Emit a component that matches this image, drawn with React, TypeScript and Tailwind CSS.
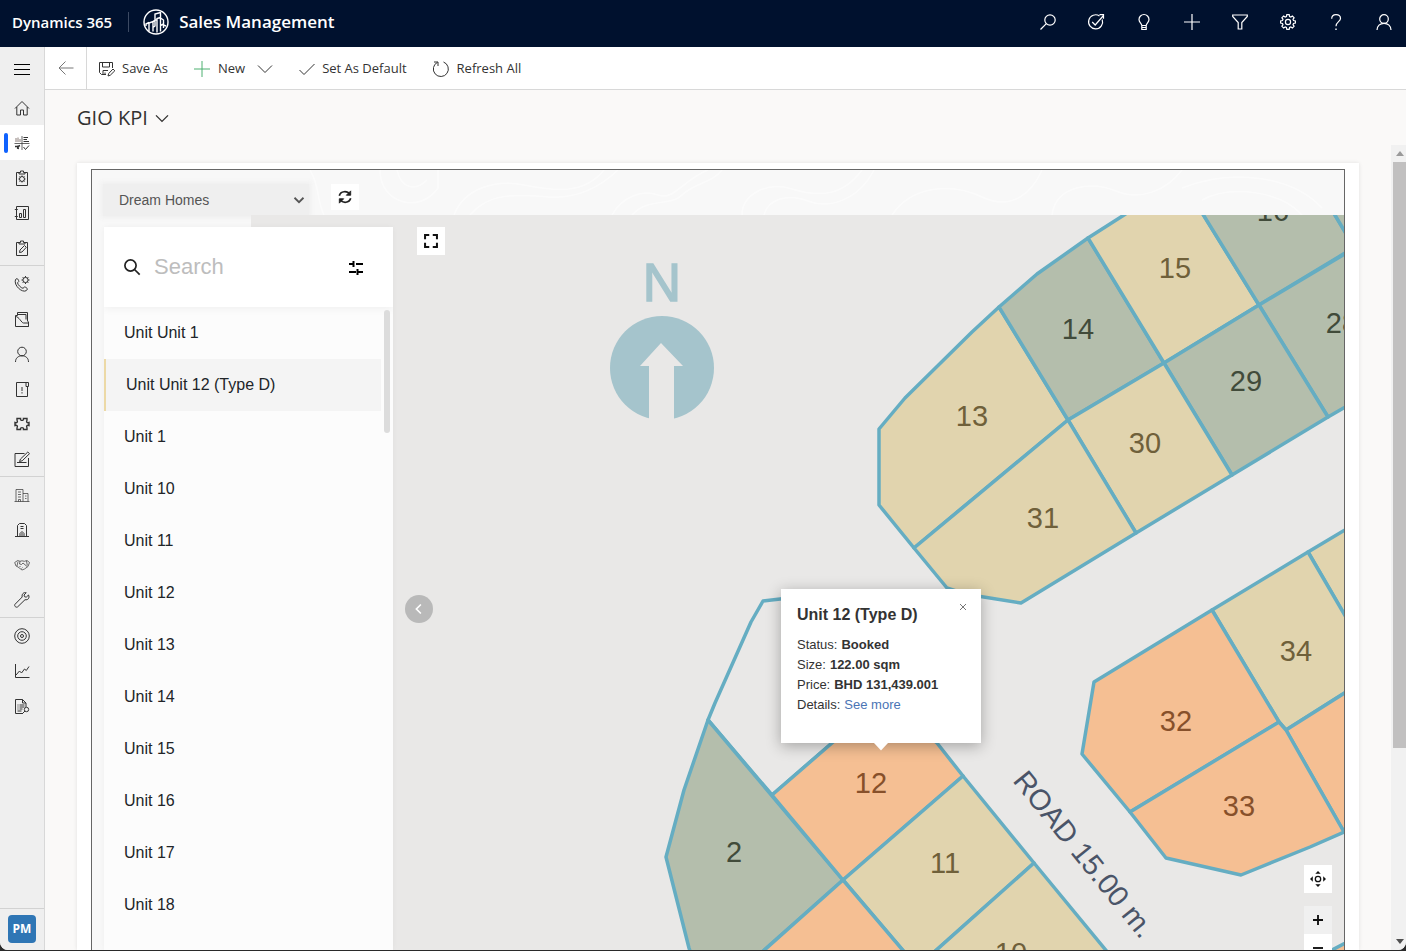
import { useState } from "react";
import type { ReactNode } from "react";

type Status = "available" | "booked" | "sold" | "blank";

type Plot = {
  label?: string;
  status: Status;
  points: string;
  x?: number;
  y?: number;
};

const FILL: Record<Status, string> = {
  available: "#e1d4ae",
  booked: "#f5bf93",
  sold: "#b4beac",
  blank: "none",
};

const LABEL: Record<Status, string> = {
  available: "#6f603a",
  booked: "#87502a",
  sold: "#414b3a",
  blank: "#444444",
};

const PLOTS: Plot[] = [
  { label: "13", status: "available", points: "999,307 1068,420 914,548 879,505 879,429 905,398 972,332", x: 972, y: 426 },
  { label: "14", status: "sold", points: "999,307 1037,274 1088,238 1164,363 1068,420", x: 1078, y: 339 },
  { label: "15", status: "available", points: "1088,238 1124,215 1180,177 1259,305 1164,363", x: 1175, y: 278 },
  { label: "16", status: "sold", points: "1180,177 1310,174 1335,215 1360,257 1360,244 1259,305", x: 1273, y: 221 },
  { status: "sold", points: "1310,174 1400,174 1400,220 1360,257 1335,215" },
  { label: "28", status: "sold", points: "1259,305 1400,221 1400,375 1328,417", x: 1342, y: 333 },
  { label: "29", status: "sold", points: "1164,363 1259,305 1328,417 1232,475", x: 1246, y: 391 },
  { label: "30", status: "available", points: "1068,420 1164,363 1232,475 1136,533", x: 1145, y: 453 },
  { label: "31", status: "available", points: "1068,420 1136,533 1021,603 965,594 947,588 914,548", x: 1043, y: 528 },
  { status: "available", points: "1308,552 1400,497 1400,710 1344,614" },
  { label: "34", status: "available", points: "1212,610 1308,552 1378,672 1286,730 1279,722", x: 1296, y: 661 },
  { status: "booked", points: "1286,730 1378,672 1420,760 1420,800 1344,832" },
  { label: "32", status: "booked", points: "1212,610 1279,722 1130,812 1082,754 1094,682", x: 1176, y: 731 },
  { label: "33", status: "booked", points: "1279,722 1286,730 1344,832 1310,847 1241,875 1166,858 1130,812", x: 1239, y: 816 },
  { status: "booked", points: "1330,951 1400,915 1400,1000 1330,1000" },
  { status: "blank", points: "763,601 840,592 885,680 832,743 772,795 708,720 715,703 751,622" },
  { label: "2", status: "sold", points: "708,720 843,880 760,954 700,980 689,948 666,857 684,790", x: 734, y: 862 },
  { label: "12", status: "booked", points: "772,795 832,743 885,700 937,743 963,776 843,880", x: 871, y: 793 },
  { label: "11", status: "available", points: "963,776 1034,863 932,954 906,954 843,880", x: 945, y: 873 },
  { label: "10", status: "available", points: "1034,863 1109,954 1109,1000 900,1000 932,954", x: 1011, y: 963 },
  { status: "booked", points: "843,880 906,954 906,1000 760,1000 760,954" },
];

const UNITS = [
  "Unit Unit 1",
  "Unit Unit 12 (Type D)",
  "Unit 1",
  "Unit 10",
  "Unit 11",
  "Unit 12",
  "Unit 13",
  "Unit 14",
  "Unit 15",
  "Unit 16",
  "Unit 17",
  "Unit 18",
];

function Icon({ children, className = "size-4", strokeWidth = 1 }: { children: ReactNode; className?: string; strokeWidth?: number }) {
  return (
    <svg
      viewBox="0 0 16 16"
      fill="none"
      stroke="currentColor"
      strokeWidth={strokeWidth}
      className={`shrink-0 overflow-visible ${className}`}
      aria-hidden
    >
      {children}
    </svg>
  );
}

const gear =
  "M6.8 .7h2.4l.4 1.9 1.2.5 1.6-1.1 1.7 1.7-1.1 1.6.5 1.2 1.9.4v2.2l-1.9.4-.5 1.2 1.1 1.6-1.7 1.7-1.6-1.1-1.2.5-.4 1.9H6.8l-.4-1.9-1.2-.5-1.6 1.1-1.7-1.7L3 10.700l-.5-1.2-1.900-.4V6.900l1.900-.4.5-1.200-1.100-1.600L3.600 2l1.600 1.100 1.200-.5z";

const HEADER_ICONS: { name: string; art: ReactNode }[] = [
  { name: "Search", art: <><circle cx="10" cy="6" r="5.200" /><path d="M6.300 9.700.5 15.500" /></> },
  { name: "Tasks", art: <><path d="M11.500 2A7 7 0 1 0 14.200 5.500" /><path d="M4.200 8l3 3L15.500 1.500M11.500 .7h4v4" /></> },
  { name: "Ideas", art: <><path d="M5.800 11.500C5.800 9.500 3 8.500 3 5.500a5 5 0 0 1 10 0c0 3-2.800 4-2.800 6zM5.800 11.500v4h4.400v-4M5.800 13.500h4.400" /></> },
  { name: "Add", art: <path d="M8 0v16M0 8h16" /> },
  { name: "Filter", art: <path d="M.7 1h14.600v1.500L9.800 8.500v6.500H6.200V8.500L.7 2.500z" /> },
  { name: "Settings", art: <><path d={gear} /><circle cx="8" cy="8" r="2.600" /></> },
  { name: "Help", art: <><path d="M3.700 4.800C3.700 2 5.500 .6 8 .6s4.500 1.500 4.500 3.900C12.500 7.500 8 8 8 12.200" /><path d="M8 14.500V16" strokeWidth="1.400" /></> },
  { name: "Account", art: <><circle cx="8" cy="5" r="4.300" /><path d="M1 16c0-4 3-6.700 7-6.700S15 12 15 16" /></> },
];

const clipboard = "M5 2.500H2.500v13h11v-13H11M5 4V2.500h1.500V1h3v1.500H11V4z";

const NAV_GROUPS: { name: string; art: ReactNode }[][] = [
  [
    { name: "Home", art: <path d="M1 8.500 8 1.500l7 7M2.800 7v8h3.700v-5h3v5h3.700V7" /> },
    {
      name: "Dashboards",
      art: (
        <>
          <path d="M8 1v14M.5 8.500h15" strokeOpacity=".75" />
          <path d="M2 3v4M4 2.500V7M6 4v3" stroke="#8c7f7a" />
          <path d="M9.500 2.500H14M9.500 4.500H13M9.500 6.500h5.500" />
          <path d="M1 11.500h3l2-1M3 13l2 .5M4 10.500v2.500" strokeWidth="1.500" />
          <path d="m9.500 12 2 2.500 3.500-4" />
        </>
      ),
    },
    { name: "Work items", art: <><path d={clipboard} /><circle cx="8" cy="9" r="2.500" /><path d="M8 5.500v1M8 11.500v1M4.500 9h1M10.500 9h1M5.500 6.500l1 1M9.500 10.500l1 1M10.500 6.500l-1 1M6.500 10.500l-1 1" /></> },
    { name: "Reports", art: <><path d="M2.500 1.500h12v13h-12zM.8 4.500h3M.8 11.500h3M5.500 12.500v-4h2v4zM9.500 12.500v-8h2v8z" /></> },
    { name: "Forms", art: <><path d={clipboard} /><path d="m5.500 12.500.5-2.500 4.500-4.500 1.800 1.800L8 12z" /></> },
  ],
  [
    { name: "Call settings", art: <><path d="M1.500 3.500 3 2.500c1 .5 1.800 2 1.800 3L3.500 6.800c.3 2 3.500 5.200 5.500 5.500l1.500-1.300c1.200 0 2.500 1 3 2l-1.300 1.700C8 17 -.5 9.500 1.500 3.500z" /><circle cx="11.500" cy="4" r="2.600" /><path d="M11.500 0v1.400M11.500 6.600V8M7.500 4h1.400M14.100 4h1.400M8.700 1.200l1 1M13.300 5.800l1 1M14.300 1.200l-1 1M9.700 5.800l-1 1" /></> },
    { name: "Files", art: <path d="M1.500 4.500h2v-3h10v9M3.500 3.500h8.500v5M1.500 4.500v11h13v-3.500H9.500C7.500 12 5 5.500 1.500 5.500M14.500 15.500v-5" /> },
    { name: "Contacts", art: <><circle cx="8" cy="5.500" r="4.300" /><path d="M1.500 16c0-4 2.800-6.200 6.500-6.200s6.500 2.200 6.500 6.200" /></> },
    { name: "Alerts", art: <><path d="M12 1.500H2.500v14h11V6M12 1.500h2.500v4H12z" /><path d="M8 6v4M8 11.200v1.300" /></> },
    { name: "Extensions", art: <path d="M1 6.500c2 .8 3-.5 2-2.500V2.500h3.500c-.5 2.500 3.500 2.500 3 0H13V4c-1 2 0 3.300 2 2.500v3c-2-.8-3 .5-2 2.500v1.500H9.500c.5-2.500-3.500-2.500-3 0H3V12c1-2 0-3.300-2-2.500z" strokeWidth="1.400" /> },
    { name: "Notes", art: <path d="M10.500 2.500H1v13h13.500V7M3 11.500h9.500M5.500 10.500 6.500 8l7.300-7 1.700 1.700L8.200 9.800z" /> },
  ],
  [
    { name: "Properties", art: <path d="M.5 14.500h15M2 14.500v-12h7v12M9 6.500h5v8M4 5h3M4 7.500h3M4 10h3M11 9h1.500M11 11.500h1.500M4.500 14.500v-2h2v2" opacity=".7" /> },
    { name: "Buildings", art: <path d="M1 14.500h14M3.500 14.500V3.500l2-2h5l2 2v11M6.500 4.500h3M6.500 6.500h3M6 14.500v-3l2-2 2 2v3M8 11v3.500" /> },
    { name: "Deals", art: <path d="m.7 5.500 3-2 2.300.8L8 3.800l2.300.5 2.700-.8 2.500 2-1.500 4-3.500 2.500L8 13l-4-3-2-1zM4 4.500l-1 4.500M6 4.300 5.500 7l2 .5L9 6l4 3.500M12.500 4l.8 4.500M5.500 10l1-1M7.500 11.500l1-1" opacity=".7" /> },
    { name: "Maintenance", art: <path d="M14.500 3 12.200 5.200l-1.700-.5-.5-1.700 2.200-2.300C9.800 0 7.500 2 8.200 5L1 12.300c-1.200 1.500 1 3.700 2.600 2.600L11 7.700c3 .7 5-2 3.500-4.700z" /> },
  ],
  [
    { name: "Goals", art: <><circle cx="8" cy="8" r="7.300" /><circle cx="8" cy="8" r="4.300" /><circle cx="8" cy="8" r="1.500" /></> },
    { name: "Forecasts", art: <path d="M1.500 1v13.500H15.500M2 12l3.500-4 2 2 3-4 1.800 1.500 2.700-4" /> },
    { name: "Audit", art: <><path d="M8.500 15.500h-7v-14h7l3.500 3.500v4M8.500 1.500V5H12M3.500 7h1M5.500 7h5M3.500 9h1M5.500 9h5M3.500 11h1M5.500 11h3M3.500 13h4" /><circle cx="12.500" cy="11.500" r="2.200" /><path d="m11 13-3 3" /></> },
  ],
];

function TopBar() {
  return (
    <header className="flex h-[47px] shrink-0 items-center bg-[#00112e] pr-3.5 pb-[3px] pl-3 text-white">
      <a href="#apps" className="text-[15px] font-semibold whitespace-nowrap">
        Dynamics 365
      </a>
      <span className="mr-3.5 ml-4 h-5 w-px bg-[#3c4a63]" />
      <svg viewBox="0 0 26 26" className="size-[26px] shrink-0" fill="none" stroke="#fff" strokeWidth="1.400" aria-hidden>
        <circle cx="13" cy="13" r="12" />
        <path d="M6 22.500V14l4-1.500v10M10 12.500l2-1V5l5.500-1.500V17M12 5v12l-2 1.500v4M14 23.500v-14l3.500-1M14 11h-2M17.500 9l3 2v8M20.500 17v-2l-3 1.500v6M3 17v-2l3-1.500M23 17l-2.500-1" />
      </svg>
      <h1 className="ml-2.5 flex-1 text-[17px] font-semibold whitespace-nowrap">Sales Management</h1>
      <nav className="flex gap-8">
        {HEADER_ICONS.map((icon) => (
          <button key={icon.name} type="button" aria-label={icon.name}>
            <Icon strokeWidth={1.2}>{icon.art}</Icon>
          </button>
        ))}
      </nav>
    </header>
  );
}

function Sidebar() {
  return (
    <aside className="flex w-[45px] shrink-0 flex-col border-r border-[#d8d8d8] bg-[#efefef] text-[#333]">
      <button type="button" aria-label="Menu" className="flex h-[43px] items-center justify-center text-black">
        <Icon>
          <path d="M0 3.500h16M0 8.500h16M0 13.500h16" />
        </Icon>
      </button>
      <nav className="flex-1 divide-y divide-[#d2d2d2]">
        {NAV_GROUPS.map((group, i) => (
          <ul key={i}>
            {group.map((item) => (
              <li key={item.name}>
                <a
                  href={`#${item.name.toLowerCase().replace(/ /g, "-")}`}
                  aria-label={item.name}
                  className={
                    item.name === "Dashboards"
                      ? "flex h-[35px] items-center bg-white pl-1"
                      : "flex h-[35px] items-center justify-center"
                  }
                >
                  {item.name === "Dashboards" && <span className="mr-1.5 h-5 w-1 rounded-sm bg-[#0f62fe]" />}
                  <Icon>{item.art}</Icon>
                </a>
              </li>
            ))}
          </ul>
        ))}
      </nav>
      <div className="border-t border-[#d2d2d2] px-2 pt-1.5 pb-[7px]">
        <button type="button" className="h-7 w-7 rounded-sm bg-[#2f76b5] text-xs font-bold text-white">
          PM
        </button>
      </div>
    </aside>
  );
}

function CommandBar() {
  return (
    <div className="flex h-[43px] shrink-0 items-stretch border-b border-[#d8d8d8] bg-white text-[13px] text-[#333]">
      <button type="button" aria-label="Back" className="flex w-[42px] items-center justify-center border-r border-[#d8d8d8] text-[#777]">
        <Icon>
          <path d="M1 8h14.500M7.500 1.500 1 8l6.500 6.500" />
        </Icon>
      </button>
      <div className="flex items-center gap-[26px] pt-0.5 pl-3 whitespace-nowrap">
        <button type="button" className="flex items-center gap-[7px]">
          <Icon>
            <path d="M7 13.500H2.500l-2-2V1.500h13V7M3.500 1.500v4.500h7V1.500M4 13.500v-4h5M6 11.500v2M9 15l.7-2.500L14 8l1.800 1.800-4.500 4.400z" />
          </Icon>
          Save As
        </button>
        <button type="button" className="flex items-center gap-2">
          <Icon>
            <path d="M8 0v16M0 8h16" stroke="#4cb071" />
          </Icon>
          New
          <Icon className="ml-1 size-4">
            <path d="m1 4.500 7 7 7-7" />
          </Icon>
        </button>
        <button type="button" className="flex items-center gap-[7px]">
          <Icon>
            <path d="m.5 9 4.500 4.500L15.500 3" />
          </Icon>
          Set As Default
        </button>
        <button type="button" className="flex items-center gap-2">
          <Icon>
            <path d="M10.500 1A7.500 7.500 0 1 1 4.500 1.300M1 1h4v4" />
          </Icon>
          Refresh All
        </button>
      </div>
    </div>
  );
}

function MapToolbar() {
  const [project, setProject] = useState("Dream Homes");
  return (
    <div className="relative flex h-[45px] shrink-0 items-start pt-3.5 pl-[11px]">
      <svg className="absolute inset-0 h-full w-full opacity-50" fill="none" stroke="#fff" strokeWidth="1.500" aria-hidden>
        <path d="M218 0c10 16 6 28 14 45M288 0c0 34 40 44 58 18V0M305 0c4 18 18 22 30 10M362 45c10-26 40-36 70-30s60 10 80-15M378 45c20-24 50-20 78-18s50-8 70-27M520 45c10-18 30-26 46-20s26-16 50-25M540 45c16-18 38-8 50-20s30-12 40-25M650 45c0-20 24-34 50-26s50 8 70-19M672 45c4-16 24-22 44-14s50 0 66-31M800 45c20-30 60-32 90-18s50-4 60-27M960 45c4-30 40-34 64-24s50 0 66-21M1110 30c30-16 80-8 100 15M1090 18c50-20 110-12 140 20" />
      </svg>
      <div className="relative h-8 w-[206px] bg-[#efefef] text-[#555] shadow-[0_0_5px_2px_#efefef]">
        <select
          aria-label="Project"
          value={project}
          onChange={(e) => setProject(e.target.value)}
          className="h-full w-full appearance-none bg-transparent pl-4 text-sm"
        >
          <option>Dream Homes</option>
          <option>Palm Villas</option>
        </select>
        <Icon className="pointer-events-none absolute top-2.5 right-1 size-3" strokeWidth={2.4}>
          <path d="m2 5 6 6 6-6" />
        </Icon>
      </div>
      <button type="button" aria-label="Refresh map" className="relative ml-[22px] flex h-[26px] w-7 items-center justify-center bg-white text-[#222]">
        <Icon className="size-3.5" strokeWidth={2}>
          <path d="M1.500 6.500C3 1 10.500.5 13.500 5M14.500 9.500C13 15 5.500 15.500 2.500 11" />
          <path d="M14.500 1v5h-5zM1.500 15v-5h5z" fill="currentColor" strokeWidth="1" />
        </Icon>
      </button>
    </div>
  );
}

function UnitPanel() {
  const [selected, setSelected] = useState("Unit Unit 12 (Type D)");
  return (
    <section className="relative mt-3 ml-3 flex w-[289px] flex-col overflow-hidden bg-[#fcfcfc] shadow-[0_0_6px_rgba(0,0,0,0.04)]">
      <div className="flex h-20 shrink-0 items-center bg-white pr-[29px] pl-5 shadow-[0_2px_8px_rgba(0,0,0,0.05)]">
        <Icon className="size-4 text-[#222]" strokeWidth={1.7}>
          <circle cx="6.500" cy="6.500" r="5.600" />
          <path d="m10.500 10.500 5.200 5.200" />
        </Icon>
        <input
          type="search"
          aria-label="Search units"
          placeholder="Search"
          className="ml-3.5 min-w-0 flex-1 pb-0.5 text-[22px] outline-none placeholder:text-[#bdbdbd]"
        />
        <button type="button" aria-label="Filters">
          <Icon strokeWidth={2}>
            <path d="M1 5h5M8 5h7M5.500 2v6M1 13h7M9.500 10v6M10 13h5" />
          </Icon>
        </button>
      </div>
      <div className="flex min-h-0 flex-1">
        <ul className="flex-1 text-base text-[#212529]">
          {UNITS.map((unit) => (
            <li key={unit}>
              <button
                type="button"
                onClick={() => setSelected(unit)}
                className={
                  unit === selected
                    ? "h-[52px] w-full border-l-2 border-[#ecd9a6] bg-[#f4f4f4] px-5 text-left"
                    : "h-[52px] w-full px-5 text-left"
                }
              >
                {unit}
              </button>
            </li>
          ))}
        </ul>
        <div className="w-3 pt-[3px] pl-[3px]">
          <div className="h-[123px] w-1.5 rounded-full bg-[#dcdcdc]" />
        </div>
      </div>
    </section>
  );
}

function UnitPopup() {
  return (
    <div className="absolute top-[374px] left-[530px] w-[200px] bg-white px-4 pt-4 pb-7 text-[#333] shadow-[0_3px_14px_rgba(0,0,0,0.3)]">
      <button type="button" aria-label="Close" className="absolute top-3 right-3 flex size-3 items-center justify-center text-[#777]">
        <Icon className="size-2" strokeWidth={2}>
          <path d="m2 2 12 12M14 2 2 14" />
        </Icon>
      </button>
      <h2 className="mb-2.5 text-base leading-5 font-bold">Unit 12 (Type D)</h2>
      <dl className="text-[13px] leading-5">
        <div className="flex gap-1">
          <dt>Status:</dt>
          <dd className="font-bold">Booked</dd>
        </div>
        <div className="flex gap-1">
          <dt>Size:</dt>
          <dd className="font-bold">122.00 sqm</dd>
        </div>
        <div className="flex gap-1">
          <dt>Price:</dt>
          <dd className="font-bold">BHD 131,439.001</dd>
        </div>
        <div className="flex gap-1">
          <dt>Details:</dt>
          <dd>
            <a href="#unit-12" className="text-[#4a74b4]">
              See more
            </a>
          </dd>
        </div>
      </dl>
      <svg viewBox="0 0 14 8" className="absolute top-full left-[93px] h-2 w-3.5" aria-hidden>
        <path d="M0 0h14L7 7.500z" fill="#fff" />
      </svg>
    </div>
  );
}

function SiteMap() {
  return (
    <div className="absolute inset-y-0 right-0 left-[159px] overflow-hidden bg-[#e9e8e7]">
      <svg
        viewBox="251 215 1093 735"
        preserveAspectRatio="xMinYMin slice"
        className="h-full w-full"
        fontFamily="'Liberation Sans', sans-serif"
        role="img"
        aria-label="Site plan"
      >
        <text x="662" y="301" fontSize="53" textAnchor="middle" fill="#a5c4cc" stroke="#a5c4cc" strokeWidth="1.500">
          N
        </text>
        <circle cx="662" cy="368" r="52" fill="#a5c4cc" />
        <path d="M661 343 683 366h-9v56h-25v-56h-9z" fill="#e9e8e7" />
        <g stroke="#65adc2" strokeWidth="3.500" strokeLinejoin="round">
          {PLOTS.map((plot) => (
            <polygon key={plot.points} points={plot.points} fill={FILL[plot.status]} />
          ))}
        </g>
        <g fontSize="29" textAnchor="middle">
          {PLOTS.filter((plot) => plot.label).map((plot) => (
            <text key={plot.label} x={plot.x} y={plot.y} fill={LABEL[plot.status]}>
              {plot.label}
            </text>
          ))}
        </g>
        <text transform="translate(1012 781) rotate(51)" fontSize="29" fill="#4a5468">
          ROAD 15.00 m.
        </text>
      </svg>
      <UnitPopup />
      <button type="button" aria-label="Full screen" className="absolute top-3 left-[166px] flex size-7 items-center justify-center bg-white text-[#111]">
        <Icon className="size-3.5" strokeWidth={2.3}>
          <path d="M1.200 6V1.200H6M10 1.200h4.800V6M14.800 10v4.800H10M6 14.800H1.200V10" />
        </Icon>
      </button>
      <button
        type="button"
        aria-label="Collapse list"
        className="absolute top-[380px] left-[154px] flex size-7 items-center justify-center rounded-full bg-[#b9b9b9] text-white"
      >
        <Icon className="size-3" strokeWidth={2.2}>
          <path d="M10.500 2 4.500 8l6 6" />
        </Icon>
      </button>
      <div className="absolute right-3 -bottom-3 flex flex-col text-[#111]">
        <button type="button" aria-label="Center map" className="mb-[13px] flex size-7 items-center justify-center bg-white">
          <Icon>
            <circle cx="8" cy="8" r="2.700" strokeWidth="1.300" />
            <path d="m8 0 2.700 2.800H5.300zM8 16l2.700-2.800H5.300zM0 8l2.800-2.700v5.400zM16 8l-2.800-2.700v5.400z" fill="currentColor" stroke="none" />
          </Icon>
        </button>
        <button type="button" aria-label="Zoom in" className="flex size-7 items-center justify-center bg-[#f0f0f0]">
          <Icon className="size-2.5" strokeWidth={3}>
            <path d="M8 0v16M0 8h16" />
          </Icon>
        </button>
        <button type="button" aria-label="Zoom out" className="flex size-7 items-center justify-center bg-white">
          <Icon className="size-2.5" strokeWidth={3}>
            <path d="M0 8h16" />
          </Icon>
        </button>
      </div>
    </div>
  );
}

function ScrollTrack() {
  return (
    <div className="flex w-[15px] shrink-0 flex-col bg-[#f1f1f1] pl-0.5">
      <div className="flex h-[17px] shrink-0 items-center justify-center">
        <svg viewBox="0 0 8 5" className="h-[5px] w-2" aria-hidden>
          <path d="M4 0 8 5H0z" fill="#9a9a9a" />
        </svg>
      </div>
      <div className="min-h-0 flex-1">
        <div className="h-[76%] bg-[#c1c0c0]" />
      </div>
      <div className="flex h-[17px] shrink-0 items-center justify-center">
        <svg viewBox="0 0 8 5" className="h-[5px] w-2" aria-hidden>
          <path d="M0 0h8L4 5z" fill="#505050" />
        </svg>
      </div>
    </div>
  );
}

export default function App() {
  return (
    <div className="h-screen bg-[#2a2a2a] pb-px font-['Open_Sans',sans-serif]">
      <div className="flex h-full flex-col overflow-hidden rounded-b-lg bg-[#faf9f8]">
        <TopBar />
        <div className="flex min-h-0 flex-1">
          <Sidebar />
          <main className="flex min-w-0 flex-1 flex-col">
            <CommandBar />
            <div className="flex h-[55px] shrink-0 items-center pl-8">
              <button type="button" className="flex items-center gap-2 text-xl font-medium text-[#323130]">
                GIO KPI
                <Icon className="size-3" strokeWidth={1.8}>
                  <path d="m0 4.500 8 8 8-8" />
                </Icon>
              </button>
            </div>
            <div className="flex min-h-0 flex-1">
              <div className="flex min-w-0 flex-1 flex-col px-8 pt-[18px]">
                <div className="flex min-h-0 flex-1 flex-col bg-white px-3.5 pt-1.5 shadow-[0_0_4px_rgba(0,0,0,0.1)]">
                  <div className="flex min-h-0 flex-1 flex-col border border-b-0 border-[#666] bg-[#f8f8f8] font-['Liberation_Sans',sans-serif]">
                    <MapToolbar />
                    <div className="relative flex min-h-0 flex-1">
                      <SiteMap />
                      <UnitPanel />
                    </div>
                  </div>
                </div>
              </div>
              <ScrollTrack />
            </div>
          </main>
        </div>
      </div>
    </div>
  );
}
